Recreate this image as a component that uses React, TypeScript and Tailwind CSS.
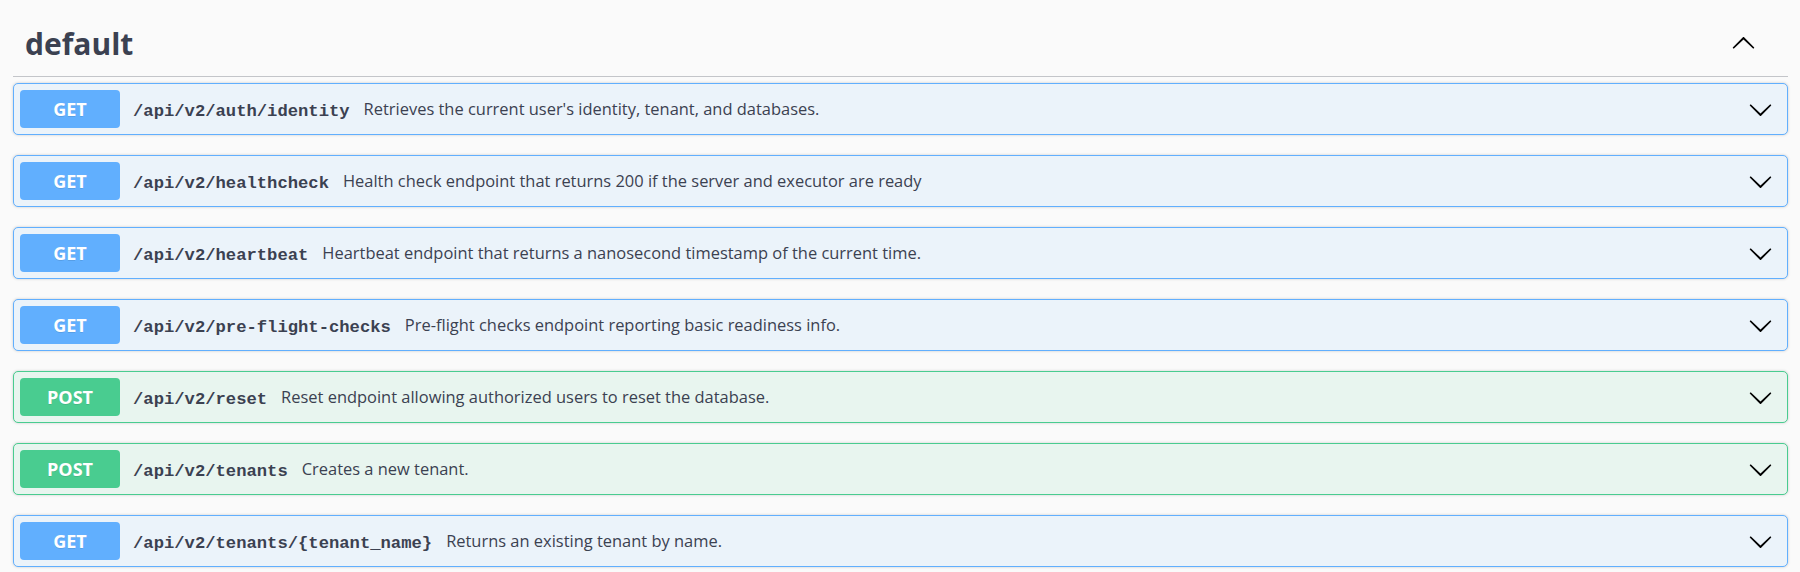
import React from 'react';

type Op = { method: 'GET' | 'POST'; path: string; summary: string };

const ops: Op[] = [
  { method: 'GET', path: '/api/v2/auth/identity', summary: "Retrieves the current user's identity, tenant, and databases." },
  { method: 'GET', path: '/api/v2/healthcheck', summary: 'Health check endpoint that returns 200 if the server and executor are ready' },
  { method: 'GET', path: '/api/v2/heartbeat', summary: 'Heartbeat endpoint that returns a nanosecond timestamp of the current time.' },
  { method: 'GET', path: '/api/v2/pre-flight-checks', summary: 'Pre-flight checks endpoint reporting basic readiness info.' },
  { method: 'POST', path: '/api/v2/reset', summary: 'Reset endpoint allowing authorized users to reset the database.' },
  { method: 'POST', path: '/api/v2/tenants', summary: 'Creates a new tenant.' },
  { method: 'GET', path: '/api/v2/tenants/{tenant_name}', summary: 'Returns an existing tenant by name.' },
];

const Arrow = ({ up = false }: { up?: boolean }) => (
  <svg width="25" height="25" viewBox="0 0 20 20" className={up ? 'rotate-180' : ''}>
    <path
      fill="#000"
      d="M17.418 6.109c.272-.268.709-.268.979 0s.271.701 0 .969l-7.908 7.83c-.27.268-.707.268-.979 0l-7.908-7.83c-.27-.268-.27-.701 0-.969.271-.268.709-.268.979 0L10 13.25l7.418-7.141z"
    />
  </svg>
);

const OpBlock = ({ method, path, summary }: Op) => {
  const isGet = method === 'GET';
  return (
    <div
      className={`flex items-center h-[52px] p-1.5 border rounded-[5px] shadow-[0_0_3px_rgba(0,0,0,0.19)] mb-5 ${
        isGet ? 'bg-[#ebf3fa] border-[#61affe]' : 'bg-[#e8f5ef] border-[#49cc90]'
      }`}
    >
      <div
        className={`w-[100px] h-[38px] shrink-0 rounded-[4px] flex items-center justify-center text-white font-bold text-[18px] [text-shadow:0_1px_0_rgba(0,0,0,0.1)] ${
          isGet ? 'bg-[#61affe]' : 'bg-[#49cc90]'
        }`}
      >
        {method}
      </div>
      <span className="ml-[13px] pt-[6px] font-['Liberation_Mono',monospace] font-bold text-[17.2px] text-[#3b4151]">
        {path}
      </span>
      <span className="ml-[14px] text-[16.45px] text-[#3b4151]">{summary}</span>
      <div className="ml-auto mr-2 flex items-center">
        <Arrow />
      </div>
    </div>
  );
};

export default function App() {
  return (
    <div className="min-h-screen bg-[#fafafa] pl-[13px] pr-3 font-['Open_Sans',sans-serif]">
      <div className="flex items-center justify-between pl-3 pr-8 pt-[21px] pb-[10px] border-b border-[#c3c5c9]">
        <h4 className="text-[30px] leading-[45px] font-bold text-[#3b4151]">default</h4>
        <Arrow up />
      </div>
      <div className="mt-[6px]">
        {ops.map((op, i) => (
          <OpBlock key={i} {...op} />
        ))}
      </div>
    </div>
  );
}
